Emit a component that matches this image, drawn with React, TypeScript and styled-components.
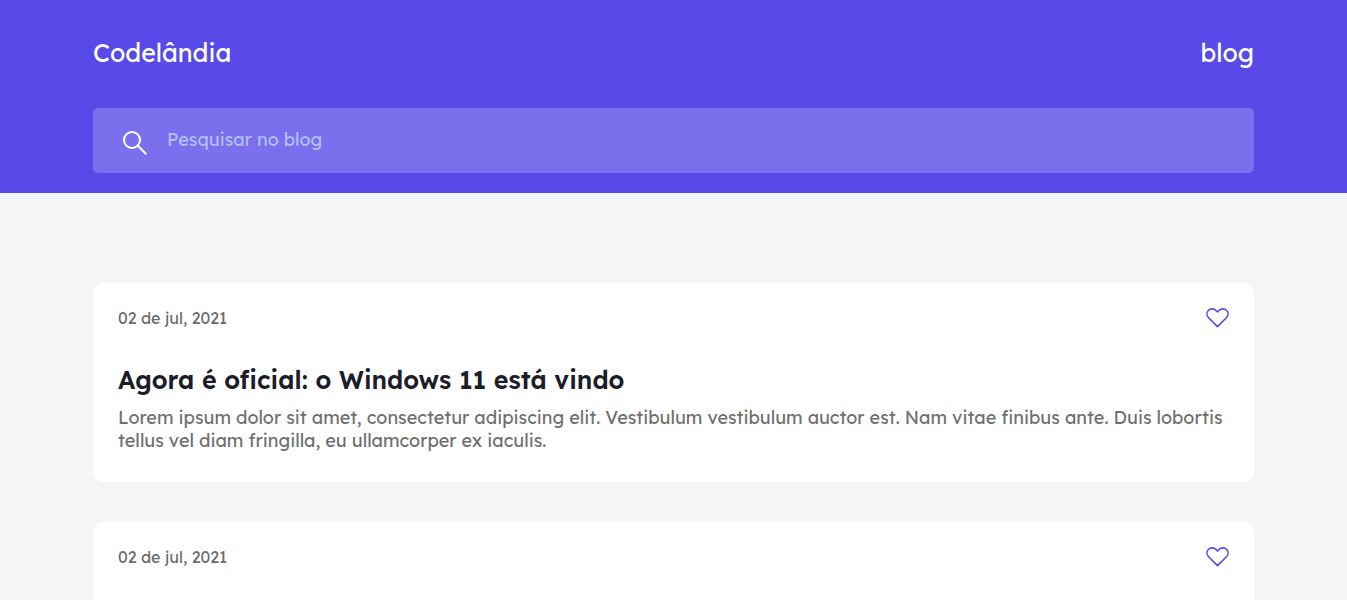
import React from "react";
import styled, { createGlobalStyle } from "styled-components";

const GlobalStyle = createGlobalStyle`
  * {
    box-sizing: border-box;
    margin: 0;
    padding: 0;
  }
  body {
    background: #f3f5f7;
    font-family: "Lexend Deca", Lexend, Inter, "Open Sans", sans-serif;
  }
`;

const Header = styled.header`
  background: #574ae8;
  padding: 37px 93px 20px;
`;

const Nav = styled.nav`
  display: flex;
  justify-content: space-between;
  align-items: center;
  margin-bottom: 39px;
`;

const NavLink = styled.a`
  color: #fff;
  font-size: 25px;
  font-weight: 400;
  line-height: 32px;
  text-decoration: none;
`;

const SearchBar = styled.label`
  display: flex;
  align-items: center;
  gap: 20px;
  height: 65px;
  padding: 0 30px;
  border-radius: 5px;
  background: #7b6fed;
`;

const SearchIcon = styled.svg`
  flex: none;
  width: 24px;
  height: 24px;
  margin-top: 4px;
`;

const SearchInput = styled.input`
  flex: 1;
  min-width: 0;
  padding-bottom: 2px;
  border: 0;
  outline: 0;
  background: transparent;
  color: #fff;
  font-family: inherit;
  font-size: 18px;
  line-height: 24px;
  &::placeholder {
    color: #b1c0f7;
    opacity: 1;
  }
`;

const Posts = styled.main`
  display: grid;
  gap: 40px;
  padding: 90px 93px 40px;
`;

const Card = styled.article`
  padding: 25px 25px 30px;
  border-radius: 10px;
  background: #fff;
`;

const CardTop = styled.div`
  display: flex;
  justify-content: space-between;
  align-items: center;
  height: 20px;
  margin-bottom: 34px;
`;

const PostDate = styled.time`
  color: #6b6b6b;
  font-size: 16px;
  line-height: 20px;
`;

const LikeButton = styled.button`
  display: block;
  border: 0;
  background: none;
  cursor: pointer;
  svg {
    display: block;
  }
`;

const Title = styled.h2`
  margin-bottom: 8px;
  color: #1b1d29;
  font-size: 25px;
  font-weight: 600;
  line-height: 36px;
`;

const Excerpt = styled.p`
  color: #6f6f6f;
  font-size: 18px;
  line-height: 23px;
`;

const posts = [1, 2].map((id) => ({
  id,
  date: "02 de jul, 2021",
  title: "Agora é oficial: o Windows 11 está vindo",
  text: "Lorem ipsum dolor sit amet, consectetur adipiscing elit. Vestibulum vestibulum auctor est. Nam vitae finibus ante. Duis lobortis tellus vel diam fringilla, eu ullamcorper ex iaculis.",
}));

export default function App() {
  return (
    <>
      <GlobalStyle />
      <Header>
        <Nav>
          <NavLink href="#">Codelândia</NavLink>
          <NavLink href="#blog">blog</NavLink>
        </Nav>
        <SearchBar>
          <SearchIcon viewBox="0 0 24 24" fill="none" stroke="#fff" strokeWidth="2" aria-hidden="true">
            <circle cx="9" cy="9" r="8" />
            <path d="M14.8 14.8 23.3 23.3" />
          </SearchIcon>
          <SearchInput type="search" placeholder="Pesquisar no blog" aria-label="Pesquisar no blog" />
        </SearchBar>
      </Header>
      <Posts>
        {posts.map((post) => (
          <Card key={post.id}>
            <CardTop>
              <PostDate dateTime="2021-07-02">{post.date}</PostDate>
              <LikeButton type="button" aria-label="Curtir">
                <svg width="23" height="20" viewBox="0 0 23 20" fill="none" stroke="#574ae8" strokeWidth="1.6" strokeLinejoin="round">
                  <path d="M11.5 18.6 2.6 9.8C.6 7.8.4 4.6 2.3 2.5 4.3.3 7.8.3 9.9 2.4L11.5 4 13.1 2.4C15.2.3 18.7.3 20.7 2.5 22.6 4.6 22.4 7.8 20.4 9.8Z" />
                </svg>
              </LikeButton>
            </CardTop>
            <Title>{post.title}</Title>
            <Excerpt>{post.text}</Excerpt>
          </Card>
        ))}
      </Posts>
    </>
  );
}
